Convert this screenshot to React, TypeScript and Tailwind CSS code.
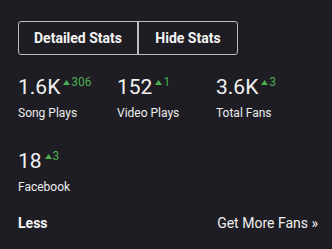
import React from 'react';

const stats = [
  { value: '1.6K', delta: '306', label: 'Song Plays' },
  { value: '152', delta: '1', label: 'Video Plays' },
  { value: '3.6K', delta: '3', label: 'Total Fans' },
  { value: '18', delta: '3', label: 'Facebook' },
];

const Stat = ({ value, delta, label }: { value: string; delta: string; label: string }) => (
  <div className="flex flex-col">
    <div className="flex items-start">
      <span className="text-[21px] leading-[24px] text-[#f2f2f2]">{value}</span>
      <span className="ml-[3px] flex items-center text-[12px] leading-[14px] text-[#4caf50]">
        <svg width="7" height="5" viewBox="0 0 7 5" className="mr-[1px]">
          <polygon points="3.5,0 7,5 0,5" fill="#4caf50" />
        </svg>
        {delta}
      </span>
    </div>
    <span className="mt-[7px] text-[12px] leading-[15px] text-[#ececec]">{label}</span>
  </div>
);

export default function App() {
  return (
    <div
      className="w-[332px] h-[249px] bg-[#1e1d23] pl-[18px] pr-[14px] pt-[21px]"
      style={{ fontFamily: 'Roboto, "Liberation Sans", sans-serif' }}
    >
      <div className="flex w-[220px] h-[34px] rounded-[3px] border border-[#bdbdbd] overflow-hidden">
        <button className="w-[120px] border-r-2 border-[#bdbdbd] text-[14px] font-bold text-[#f4f4f4]">
          Detailed Stats
        </button>
        <button className="flex-1 text-[14px] font-bold text-[#f4f4f4]">Hide Stats</button>
      </div>

      <div className="mt-[20px] grid grid-cols-[99px_99px_99px] gap-y-[28px]">
        {stats.map((s) => (
          <Stat key={s.label} {...s} />
        ))}
      </div>

      <div className="mt-[19px] flex items-center justify-between">
        <span className="text-[14px] leading-[18px] font-bold text-[#f4f4f4]">Less</span>
        <span className="text-[14px] leading-[18px] text-[#f0f0f0]">Get More Fans »</span>
      </div>
    </div>
  );
}
